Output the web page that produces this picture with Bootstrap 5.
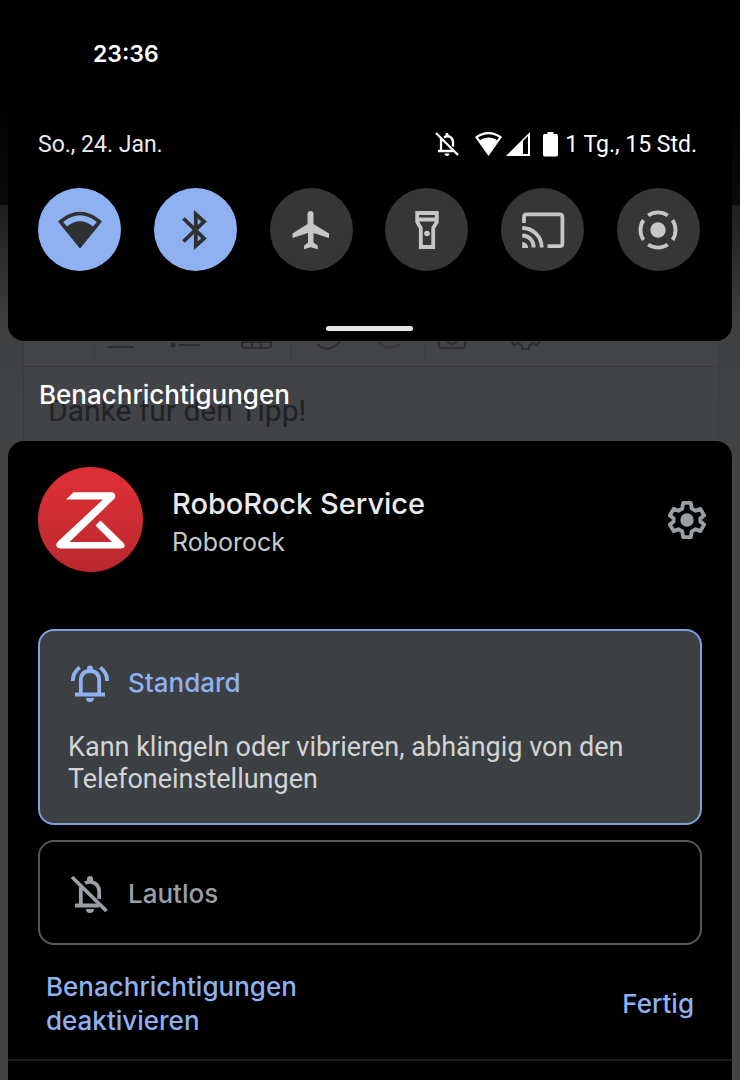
<!DOCTYPE html>
<html lang="de">
<head>
<meta charset="utf-8">
<meta name="viewport" content="width=device-width, initial-scale=1">
<title>Benachrichtigungen</title>
<link href="https://cdn.jsdelivr.net/npm/bootstrap@5.3.0/dist/css/bootstrap.min.css" rel="stylesheet">
<style>
  :root { --accent: #8fb1f2; --tile: #363636; --muted: #9aa0a6; }
  body {
    font-family: Inter, "Open Sans", sans-serif;
    color: #e8eaed;
    background: linear-gradient(#000 0, #000 100px, #0b0b0b 205px, #1e1e1f 205px, #3f4042 330px, #424344 420px) no-repeat #424344;
  }
  .roboto { font-family: Roboto, sans-serif; }
  .fs-status { font-size: 23px; line-height: 28px; }
  .fs-label { font-size: 26px; line-height: 34px; font-weight: 500; }
  .fs-desc { font-size: 27px; line-height: 32px; }
  .fs-app { font-size: 29px; line-height: 38px; font-weight: 500; }
  .fs-sub { font-size: 25px; line-height: 38px; color: #c6c9cc; }

  .clock { padding: 40px 93px 0; color: #fff; font-weight: 600; }
  .shade { background: #000; margin: 0 8px; }
  .quick { border-radius: 0 0 16px 16px; padding: 63px 32px 10px 30px; }
  .status-icons { color: #fff; padding-right: 3px; }
  .battery { margin: 0 6px 0 12px; }
  .tile {
    width: 83px; height: 83px; padding: 0; border: 0;
    display: flex; align-items: center; justify-content: center;
    background: var(--tile); color: #c6c6c6;
  }
  .tile.active { background: var(--accent); color: #2f3032; }
  .tiles { margin-top: 29px; }
  .handle { width: 87px; height: 5px; margin: 55px auto 0; background: #e6e6e6; }

  /* page that shows through between the two shades */
  .behind { margin: 0 21px 0 23px; height: 100px; border: solid #3a3b3d; border-width: 0 1px; background: #424346; }
  .editor-bar { height: 26px; border-bottom: 1px solid #39393b; background: #434446; }
  .editor-bar svg { display: block; width: 100%; }
  .editor-text { font-size: 30px; line-height: 36px; padding: 26px 24px 0; color: #212224; }
  .section-title { top: 37px; left: 39px; color: #fff; }

  .notice { border-radius: 16px 16px 0 0; }
  .notice-main { padding: 26px 30px 21px; }
  .notice-head { gap: 28px; }
  .app-names { padding-top: 6px; }
  .gear { color: var(--muted); margin-right: -5px; }
  .channel { border: 2px solid #55585c; border-radius: 16px; padding: 33px 28px 30px; cursor: pointer; color: var(--muted); }
  .channel-row { gap: 18px; }
  .channel-row svg { margin-left: 2px; }
  .channels { margin-top: 56px; gap: 15px; }
  .btn-check:checked + .channel { background: #3c4043; border-color: #7f9fe0; color: var(--accent); padding-bottom: 28px; }
  .channel-desc { margin-top: 29px; color: #d2d3d5; }
  .btn-check:focus-visible + .channel { box-shadow: 0 0 0 3px #8fb1f280; }
  .action { color: var(--accent); padding: 0 8px; border: 0; background: none; text-align: left; }
  .actions { margin-top: 25px; }
  .last-line { border-top: 2px solid #1d1d1e; }
</style>
</head>
<body class="min-vh-100 d-flex flex-column overflow-x-hidden">

<header>
  <div class="clock fs-status">23:36</div>
  <section class="shade quick" aria-label="Schnelleinstellungen">
    <div class="d-flex justify-content-between align-items-center roboto fs-status">
      <span>So., 24. Jan.</span>
      <span class="status-icons d-flex align-items-center">
        <svg class="me-3" width="24" height="26" viewBox="0 0 24 26" fill="none" stroke="currentColor" stroke-width="2.300"><path d="M1 1l22 22"/><path d="M6 7v11M3 19h15M9 5.500c5-3 9 0 9 5v4"/><path d="M10 22h4c0 2-4 2-4 0zM11 4V1.500h2V4z" fill="currentColor" stroke-width="1"/></svg>
        <svg class="me-1" width="27" height="26" viewBox="0 0 27 26" fill="currentColor"><path d="M13.500 0C8 0 3.500 2 0 5l13.500 19L27 5C23.500 2 19 0 13.500 0zm0 2.300c4 0 7.700 1.300 10.500 3.300l-2 2.700C19.500 6.500 16.700 5.500 13.500 5.500S7.500 6.500 5 8.300L3 5.600c2.800-2 6.500-3.300 10.500-3.300z"/></svg>
        <svg width="24" height="26" viewBox="0 0 24 26" fill="currentColor"><path fill-rule="evenodd" d="M24 0v24H0zM17 9v13h5V4z"/></svg>
        <svg class="battery" width="17" height="26" viewBox="0 0 17 26" fill="currentColor"><path d="M5.500 0h6v2h3q1.500 0 1.500 2v18.500q0 2-1.500 2h-12q-1.500 0-1.500-2V4q0-2 1.500-2h3z"/></svg>
        <span>1 Tg., 15 Std.</span>
      </span>
    </div>

    <div class="tiles d-flex justify-content-between">
      <button type="button" class="btn tile rounded-circle active" aria-label="WLAN" aria-pressed="true">
        <svg width="46" height="40" viewBox="0 0 46 40"><path d="M1.500 11.500Q23-7 44.500 11.500L23 38z" fill="currentColor" stroke="currentColor" stroke-width="1" stroke-linejoin="round"/><path d="M6 12Q23-1.500 40 12L36 16.500Q23 6 10 16.500z" fill="#8fb1f2"/></svg>
      </button>
      <button type="button" class="btn tile rounded-circle active" aria-label="Bluetooth" aria-pressed="true">
        <svg width="26" height="40" viewBox="0 0 26 40" fill="none" stroke="currentColor" stroke-width="3.800"><path d="M1.500 8.500L22 28.500l-8.200 7.200V4.300l8.200 7.200L1.500 31.500"/></svg>
      </button>
      <button type="button" class="btn tile rounded-circle" aria-label="Flugmodus" aria-pressed="false">
        <svg width="38" height="40" viewBox="0 0 38 40" fill="currentColor"><path d="M18.500 1c1.800 0 3 1.300 3 2.800V14L37 23.500V28l-15.500-5v9.500l4.300 3.200v3.500l-7.300-2-6.500 2v-3.500l4-3.200V23L.5 28v-4.500L15.500 14V3.800C15.500 2.300 16.700 1 18.500 1z"/></svg>
      </button>
      <button type="button" class="btn tile rounded-circle" aria-label="Taschenlampe" aria-pressed="false">
        <svg width="26" height="40" viewBox="0 0 26 40" fill="none" stroke="currentColor" stroke-width="3.800"><path d="M3.200 3h19.600v9l-3.600 6v19H6.800V18l-3.600-6zM3 9.500h20"/><circle cx="13" cy="23.500" r="2.800" fill="currentColor" stroke="none"/></svg>
      </button>
      <button type="button" class="btn tile rounded-circle" aria-label="Streamen" aria-pressed="false">
        <svg width="44" height="38" viewBox="0 0 44 38" fill="none" stroke="currentColor" stroke-width="3.800"><path d="M3 12V6q0-2.700 2.700-2.700h33q2.700 0 2.700 2.700v27q0 2.200-2.700 2.200H26.500"/><path d="M1.200 24.500a11.500 11.500 0 0 1 11.500 12M1.200 17a19.500 19.500 0 0 1 19.500 19.500"/><path d="M1.200 31a6 6 0 0 1 6 6h-6z" fill="currentColor" stroke="none"/></svg>
      </button>
      <button type="button" class="btn tile rounded-circle" aria-label="Aufnahme" aria-pressed="false">
        <svg width="40" height="40" viewBox="0 0 40 40" fill="none" stroke="currentColor" stroke-width="3.800"><circle cx="20" cy="20" r="7.700" fill="currentColor" stroke="none"/><path d="M10.200 5.500a17.300 17.300 0 0 1 19.600 0M34.500 10.200a17.300 17.300 0 0 1 0 19.600M29.800 34.500a17.300 17.300 0 0 1-19.600 0M5.500 29.800a17.300 17.300 0 0 1 0-19.600"/></svg>
      </button>
    </div>
    <div class="handle rounded-pill"></div>
  </section>
</header>

<div class="position-relative">
  <div class="behind overflow-hidden" aria-hidden="true">
    <div class="editor-bar">
      <svg height="26" viewBox="0 0 694 26" preserveAspectRatio="xMinYMin slice" fill="none" stroke="#2d2e30" stroke-width="2">
        <path d="M70 0v22M267 0v22M401 0v22" stroke="#3b3c3e" stroke-width="1"/>
        <path d="M84 6h26M155 4h21"/><circle cx="149" cy="4" r="2.500" fill="#2d2e30" stroke="none"/>
        <path d="M218-2v6q0 3 3 3h23q3 0 3-3v-6M218 1h29M228 0v7M237 0v7M293 3q12 11 23-3"/>
        <path d="M353-1q9 13 23 4" stroke="#37383a"/>
        <path d="M416-2v6q0 3 3 3h20q3 0 3-3v-6M424 0q5 6 10 0M487-2l4 6 5-2 3 3v3h7V5l3-3 5 2 4-6" transform="translate(-1)"/>
      </svg>
    </div>
    <div class="editor-text roboto">Danke für den Tipp!</div>
  </div>
  <h1 class="section-title position-absolute fs-label m-0">Benachrichtigungen</h1>
</div>

<main class="shade notice flex-grow-1">
  <div class="notice-main">
    <div class="notice-head d-flex align-items-center">
      <svg class="flex-shrink-0" width="106" height="106" viewBox="0 0 106 106" role="img" aria-label="Roborock">
        <defs><linearGradient id="red" x2="0" y2="1"><stop offset=".2" stop-color="#d92f35"/><stop offset="1" stop-color="#b9282f"/></linearGradient></defs>
        <circle cx="52.500" cy="52.500" r="52.500" fill="url(#red)"/>
        <path d="M28 32.500L35.500 25.300H73c4.500 0 5.500 4.200 2.800 7L31.500 75H74L57.500 58.500l5-5L85 75.500c3.200 3.200 1.500 6-2.500 6h-60c-4.500 0-5.500-4-2.500-7L65 32.500z" fill="#fff"/>
      </svg>
      <div class="app-names flex-grow-1">
        <div class="fs-app">RoboRock Service</div>
        <div class="fs-sub">Roborock</div>
      </div>
      <button type="button" class="btn border-0 p-0 gear" aria-label="Einstellungen">
        <svg class="d-block" width="40" height="40" viewBox="0 0 42 42" fill="none" stroke="currentColor" stroke-width="4" stroke-linejoin="round"><path d="M17 3h8l1 6 4 2.300 5-2 4 7-4 3v3.400l4 3-4 7-5-2-4 2.300-1 6h-8l-1-6-4-2.300-5 2-4-7 4-3v-3.400l-4-3 4-7 5 2 4-2.300z"/><circle cx="21" cy="21" r="7" fill="currentColor" stroke="none"/></svg>
      </button>
    </div>

    <div class="channels d-flex flex-column" role="radiogroup" aria-label="Benachrichtigungsart">
      <div>
        <input class="btn-check" type="radio" name="channel" id="standard" checked>
        <label class="channel d-block" for="standard">
          <span class="channel-row d-flex align-items-center fs-label">
            <svg width="40" height="38" viewBox="0 0 40 38" fill="none" stroke="currentColor" stroke-width="3.800"><path d="M10.800 30V17q0-10 9.200-10t9.200 10v13M5 30.500h30"/><path d="M17 7V4.500a3 3 0 0 1 6 0V7zM16 34h8a4 4 0 0 1-8 0z" fill="currentColor" stroke="none"/><path d="M2.800 17q0-8.500 7-13.500M37.200 17q0-8.500-7-13.500"/></svg>
            Standard
          </span>
          <span class="channel-desc d-block roboto fs-desc">Kann klingeln oder vibrieren, abhängig von den Telefoneinstellungen</span>
        </label>
      </div>
      <div>
        <input class="btn-check" type="radio" name="channel" id="lautlos">
        <label class="channel d-block" for="lautlos">
          <span class="channel-row d-flex align-items-center fs-label">
            <svg width="40" height="38" viewBox="0 0 40 38" fill="none" stroke="currentColor" stroke-width="3.800"><path d="M2 2l34.500 34"/><path d="M10.800 30V12M5 30.500h24M15 8.200q3-1.800 7-1 7.200 1.700 7.200 10V24"/><path d="M17 7V4a3 3 0 0 1 6 0v4zM16 34h8a4 4 0 0 1-8 0z" fill="currentColor" stroke="none"/></svg>
            Lautlos
          </span>
        </label>
      </div>
    </div>

    <div class="actions d-flex justify-content-between align-items-center">
      <button type="button" class="action fs-label">Benachrichtigungen<br>deaktivieren</button>
      <button type="button" class="action fs-label">Fertig</button>
    </div>
  </div>
  <div class="last-line"></div>
</main>

<script src="https://cdn.jsdelivr.net/npm/bootstrap@5.3.0/dist/js/bootstrap.bundle.min.js"></script>
</body>
</html>
